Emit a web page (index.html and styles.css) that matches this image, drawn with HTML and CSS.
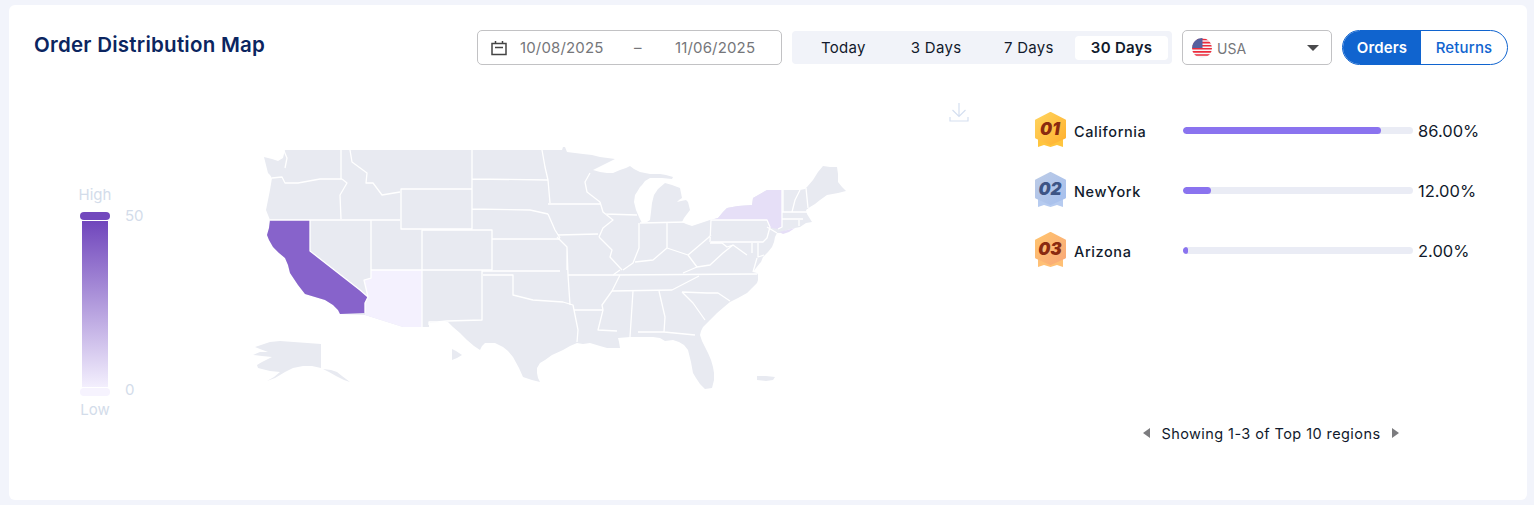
FILE: index.html
```html
<!DOCTYPE html>
<html lang="en">
<head>
<meta charset="utf-8">
<title>Order Distribution Map</title>
<link rel="stylesheet" href="styles.css">
</head>
<body>
<main class="card">
  <header class="head">
    <h1 class="title">Order Distribution Map</h1>
    <div class="controls">
      <div class="dates">
        <svg class="cal" viewBox="0 0 16 16" width="16" height="16"><path d="M1 3.500h14v11H1zM4.500 1v3M11.500 1v3M4 7.500h8" fill="none" stroke="#444" stroke-width="1.500"/></svg>
        <span class="date">10/08/2025</span>
        <span class="dash">–</span>
        <span class="date">11/06/2025</span>
      </div>
      <div class="tabs">
        <span class="tab">Today</span>
        <span class="tab">3 Days</span>
        <span class="tab">7 Days</span>
        <span class="tab tab-on">30 Days</span>
      </div>
      <div class="select">
        <svg class="flag" viewBox="0 0 20 20" width="20" height="20">
          <defs><clipPath id="fc"><circle cx="10" cy="10" r="10"/></clipPath></defs>
          <g clip-path="url(#fc)">
            <rect width="20" height="20" fill="#f5f5f7"/>
            <path d="M0 1.500h20M0 4.600h20M0 7.700h20M0 10.800h20M0 13.900h20M0 17h20" stroke="#ec2b3c" stroke-width="1.600"/>
            <rect width="10.500" height="10" fill="#56609f"/>
          </g>
        </svg>
        <span class="sel-text">USA</span>
        <span class="caret"></span>
      </div>
      <div class="toggle">
        <span class="tog tog-on">Orders</span>
        <span class="tog">Returns</span>
      </div>
    </div>
  </header>

  <section class="body">
    <div class="legend">
      <div class="leg-label">High</div>
      <div class="leg-scale">
        <div class="leg-track">
          <div class="handle handle-top"></div>
          <div class="leg-bar"></div>
          <div class="handle handle-low"></div>
        </div>
        <div class="leg-ticks"><span>50</span><span>0</span></div>
      </div>
      <div class="leg-label leg-low">Low</div>
    </div>

    <div class="map-wrap">
      <svg class="map" viewBox="240 140 620 260" width="620" height="260">
        <path class="land" d="M264 157 272 159 278 161 283 158 285 150 472 150 542 150 562 150 563 147 565 147 567 152 575 153 583 154 592 155 600 157 615 159 605 164 597 168 593 170 600 172 607 173 613 173 620 170 626 168 630 166 634 169 640 172 650 174 660 174 666 175 673 177 672 179 662 178 655 178 650 178 645 181 642 185 640 187 637 192 635 195 634 202 636 210 639 217 642 223 647 222 650 220 651 212 652 203 654 195 658 189 665 183 672 185 680 188 681 193 682 198 679 200 677 202 681 201 686 200 688 202 689 206 690 210 687 214 684 218 682 222 686 224 692 226 698 224 704 222 710 220 718 218 723 212 727 208 738 206 752 205 753 198 760 194 767 190 782 190 790 190 800 190 805 189 807 187 813 180 818 172 823 166 830 167 837 167 838 174 838 182 842 187 846 191 838 193 827 195 820 200 815 204 810 207 806 210 807 214 812 222 806 223 800 227 795 228 787 230 780 233 777 233 775 237 774 242 772 247 768 252 764 256 763 257 761 262 760 263 756 268 753 272 757 273 758 275 758 280 757 283 752 288 747 293 738 298 730 302 724 307 717 313 710 320 703 327 701 331 700 335 702 341 705 347 708 353 711 360 713 367 714 373 714 380 712 388 705 389 700 384 696 378 693 373 691 362 688 350 684 345 679 342 673 340 665 341 660 338 653 337 647 337 640 337 630 337 618 338 619 342 620 348 613 348 607 348 600 346 590 343 583 344 577 343 570 346 563 350 552 355 545 360 540 363 537 368 537 373 538 378 540 382 532 380 523 377 519 368 513 357 508 351 503 347 495 343 485 343 482 346 480 350 474 346 467 340 460 333 453 327 448 322 440 322 429 323 429 327 403 327 365 315 340 314 338 310 333 305 325 300 315 297 305 294 298 285 290 273 288 265 285 258 279 253 273 247 269 240 267 235 269 228 270 220 268 215 266 210 268 200 270 190 272 178 270 175 268 173 266 165Z"/>
        <path class="land" d="M255 347 270 342 280 341 321 344 321 368 312 366 303 366 298 367 293 368 285 372 275 378 267 381 274 377 280 372 270 371 258 368 257 365 262 362 272 357 262 356 253 355 260 352 268 352 260 349ZM323 369 331 370 337 372 342 376 350 382 344 380 336 376 329 372ZM452 349 456 351 462 355 457 358 452 360ZM757 376 766 376 775 377 773 380 766 381 757 380Z"/>
        <path class="az" d="M371 270H422V327H403L365 315V303L368 297 364 280 371 278Z"/>
        <path class="ca" d="M270 220H310V251L360 290 368 297 365 303V313L340 314 338 310 333 305 325 300 315 297 305 294 298 285 290 273 288 265 285 258 279 253 273 247 269 240 267 235 269 228Z"/>
        <path class="ny" d="M718 218 723 212 727 208 738 206 752 205 753 198 760 194 767 190H782V227L778 229 767 227 770 226 767 220H711Z"/>
        <path class="ny" d="M779 232 787 230 795 228 789 232 783 234Z"/>
        <g class="lines">
          <path d="M284 151 287 158 285 168M272 178 282 177 285 183 298 183 320 179H342M341 150V179M342 179 347 183 340 195 341 219M270 220H400M350 150 352 162 367 173 366 183H373L382 195 400 192"/>
          <path d="M401 189H472V229H401ZM472 150V189M472 179 548 180M472 209 530 210 548 214M542 150 545 167 548 180 550 203M548 214 555 230 560 238M492 239H560"/>
          <path d="M422 230H492V270H422ZM371 220V270H422M371 270V278L364 280 368 297M310 220V251L360 290 368 297 365 303V313M422 270V327M422 270H482V320L447 321 437 322H429V325"/>
          <path d="M482 271H560M483 275H513V295L533 300 563 302 573 305 574 310 578 330 577 342M574 310H603M568 275H613L620 270M567 247 568 275 570 305M557 237 567 247V270"/>
          <path d="M548 204H600M558 235 598 234M600 202 603 212 613 220 603 228 599 237M599 237 612 250 610 257 622 270M605 214 637 215M590 173 585 182 587 192 600 202"/>
          <path d="M639 223V248L633 263 623 270M667 223V248M640 223 687 222M635 262 653 260 667 248M667 248 688 255 708 238 711 235M711 220 710 242M711 220H767L770 227 767 238 763 242H711"/>
          <path d="M782 190V227L778 229M767 227 777 233M688 255 697 267 710 265 723 253 733 245M710 243H722L727 247 733 245 747 255M758 243V257L764 255M752 243V253M757 258 753 272"/>
          <path d="M613 275 757 274M683 273 697 267M612 291 672 290 699 276M620 275 612 291 602 305 603 310 598 330 617 331M633 291 630 337M659 291 665 317 664 332 695 335M638 332H664"/>
          <path d="M682 292 693 303 705 320M682 292 707 293H718L730 301M783 190V212M792 212 795 200 800 190M806 188 808 208M782 212H808M782 219H803M799 220V226"/>
        </g>
      </svg>
      <svg class="dl" viewBox="0 0 20 20" width="20" height="20"><path d="M10 1V14M3.500 8 10 14.500 16.500 8M1 15V19H19V15" fill="none" stroke="#d5dff0" stroke-width="1.200"/></svg>
    </div>

    <div class="ranks">
      <div class="rank">
        <svg class="badge" viewBox="0 0 31 36" width="31" height="36">
          <defs><linearGradient id="g1" x1="0" y1="0" x2="1" y2="1"><stop offset="0" stop-color="#ffd45e"/><stop offset="1" stop-color="#ffb02e"/></linearGradient></defs>
          <path d="M3 25H28V35L22 33 15.500 35 9 33 3 35Z" fill="#ffc53e"/>
          <path class="hex" d="M15.500 1 30 8.500V25.500L15.500 32 1 25.500V8.500Z" fill="url(#g1)" stroke="url(#g1)"/>
          <text class="badge-num num-warm" x="15" y="23">01</text>
        </svg>
        <span class="rank-name">California</span>
        <div class="rank-bar"><div class="rank-fill" style="width:86%"></div></div>
        <span class="rank-val">86.00%</span>
      </div>
      <div class="rank">
        <svg class="badge" viewBox="0 0 31 36" width="31" height="36">
          <defs><linearGradient id="g2" x1="0" y1="0" x2="1" y2="1"><stop offset="0" stop-color="#bccbe6"/><stop offset="1" stop-color="#a5bfee"/></linearGradient></defs>
          <path d="M3 25H28V35L22 33 15.500 35 9 33 3 35Z" fill="#b6cbf0"/>
          <path class="hex" d="M15.500 1 30 8.500V25.500L15.500 32 1 25.500V8.500Z" fill="url(#g2)" stroke="url(#g2)"/>
          <text class="badge-num num-cool" x="15" y="23">02</text>
        </svg>
        <span class="rank-name">NewYork</span>
        <div class="rank-bar"><div class="rank-fill" style="width:12%"></div></div>
        <span class="rank-val">12.00%</span>
      </div>
      <div class="rank">
        <svg class="badge" viewBox="0 0 31 36" width="31" height="36">
          <defs><linearGradient id="g3" x1="0" y1="0" x2="1" y2="1"><stop offset="0" stop-color="#ffc46e"/><stop offset="1" stop-color="#f9a878"/></linearGradient></defs>
          <path d="M3 25H28V35L22 33 15.500 35 9 33 3 35Z" fill="#ffc075"/>
          <path class="hex" d="M15.500 1 30 8.500V25.500L15.500 32 1 25.500V8.500Z" fill="url(#g3)" stroke="url(#g3)"/>
          <text class="badge-num num-warm" x="15" y="23">03</text>
        </svg>
        <span class="rank-name">Arizona</span>
        <div class="rank-bar"><div class="rank-fill" style="width:2%"></div></div>
        <span class="rank-val">2.00%</span>
      </div>
      <div class="pager">
        <span class="arrow arrow-l"></span>
        <span class="pager-text">Showing 1-3 of Top 10 regions</span>
        <span class="arrow arrow-r"></span>
      </div>
    </div>
  </section>
</main>
</body>
</html>
```
FILE: styles.css
```css
* { box-sizing: border-box; }
html, body { height: 100%; }
body {
  margin: 0;
  padding: 5px 7px 5px 9px;
  background: #f2f4fb;
  font-family: Inter, "Noto Sans", sans-serif;
  color: #111a2c;
  overflow: hidden;
}
.card {
  height: 495px;
  background: #fff;
  border-radius: 6px;
  padding: 25px 19px 0 25px;
}
.head {
  display: flex;
  justify-content: space-between;
  align-items: flex-start;
  height: 35px;
}
.title {
  margin: 0;
  font-size: 20.500px;
  line-height: 30px;
  font-weight: 600;
  letter-spacing: .25px;
  color: #0b2560;
}
.controls { display: flex; gap: 10px; align-items: center; height: 35px; }
.dates {
  width: 305px;
  height: 35px;
  border: 1px solid #c2c2c4;
  border-radius: 5px;
  display: flex;
  align-items: center;
  padding-left: 13px;
  color: #75767a;
  font-size: 15px;
  letter-spacing: .15px;
}
.cal { margin-right: 13px; }
.date { width: 85px; }
.dash { width: 70px; padding-left: 29px; }
.tabs {
  width: 380px;
  height: 33px;
  background: #f1f3f9;
  border-radius: 4px;
  display: grid;
  grid-template-columns: repeat(4, 1fr);
  padding: 5px 4px 4px 5px;
  font-size: 15px;
}
.tab {
  display: flex;
  align-items: center;
  justify-content: center;
  border-radius: 4px;
  letter-spacing: .3px;
  padding-bottom: 1px;
}
.tab-on { background: #fff; font-weight: 600; }
.select {
  width: 150px;
  height: 35px;
  border: 1px solid #c2c2c4;
  border-radius: 5px;
  display: flex;
  align-items: center;
  padding: 0 12px 0 9px;
  font-size: 14px;
  color: #75767a;
}
.flag { margin-right: 5px; }
.sel-text { flex: 1; padding-top: 1px; }
.caret {
  width: 0;
  height: 0;
  border-left: 6px solid transparent;
  border-right: 6px solid transparent;
  border-top: 6px solid #4a4a4c;
}
.toggle {
  width: 166px;
  height: 35px;
  display: flex;
  border: 1px solid #1064cf;
  border-radius: 18px;
  overflow: hidden;
  font-size: 15px;
  font-weight: 500;
  color: #1064cf;
}
.tog { display: flex; align-items: center; justify-content: center; flex: 1; letter-spacing: .15px; }
.tog-on { flex: 0 0 78px; background: #1064cf; color: #fff; font-weight: 600; }

.body { display: flex; margin-top: 36px; }
.legend {
  width: 160px;
  margin-left: 46px;
  padding-top: 85px;
  color: #d3dcea;
  font-size: 15px;
}
.leg-label { width: 30px; height: 18px; line-height: 18px; display: flex; justify-content: center; }
.leg-low { margin-top: 5px; }
.leg-scale { display: flex; margin-top: 8px; height: 184px; }
.leg-track { width: 30px; display: flex; flex-direction: column; align-items: center; }
.handle { width: 30px; height: 8px; border-radius: 4px; flex: none; }
.handle-top { background: #7248bd; }
.handle-low { background: #f6f3fe; }
.leg-bar {
  width: 26px;
  flex: 1;
  margin: 1px 0;
  background: linear-gradient(#7046bc, #f3effd);
}
.leg-ticks {
  margin-left: 15px;
  display: flex;
  flex-direction: column;
  justify-content: space-between;
  line-height: 14px;
  margin-top: -3px;
  margin-bottom: -1px;
}
.map-wrap { position: relative; width: 795px; padding-top: 39px; height: 300px; }
.map { display: block; }
.land { fill: #e8eaf1; }
.ca { fill: #8763cb; }
.az { fill: #f4f1fe; }
.ny { fill: #e6dff7; }
.lines path { fill: none; stroke: #fff; stroke-width: 1.300; stroke-linejoin: round; }
.dl { position: absolute; left: 709px; top: 1px; }

.ranks { flex: 1; padding-top: 11px; }
.rank { display: flex; align-items: center; height: 36px; margin-bottom: 24px; }
.badge { flex: none; margin-right: 8px; }
.hex { stroke-width: 2; stroke-linejoin: round; }
.badge-num {
  font-family: Inter, sans-serif;
  font-size: 17px;
  font-weight: 900;
  font-style: italic;
  text-anchor: middle;
}
.num-warm { fill: #8a2a10; }
.num-cool { fill: #3d5485; }
.rank-name { width: 109px; font-size: 14.500px; font-weight: 500; letter-spacing: .6px; padding-top: 2px; }
.rank-bar { width: 230px; height: 7px; border-radius: 4px; background: #eaecf5; margin-right: 5px; overflow: hidden; }
.rank-fill { height: 100%; border-radius: 4px; background: #8a73ef; min-width: 5px; }
.rank-val { font-size: 16.500px; padding-top: 2px; }
.pager {
  display: flex;
  align-items: center;
  justify-content: center;
  height: 22px;
  margin-top: 154px;
  font-size: 14.500px;
  gap: 12px;
  padding-right: 2px;
  padding-left: 1px;
}
.pager-text { letter-spacing: .42px; }
.arrow { width: 0; height: 0; border-top: 5px solid transparent; border-bottom: 5px solid transparent; }
.arrow-l { border-right: 7px solid #7c7c7f; }
.arrow-r { border-left: 7px solid #7c7c7f; }
```
